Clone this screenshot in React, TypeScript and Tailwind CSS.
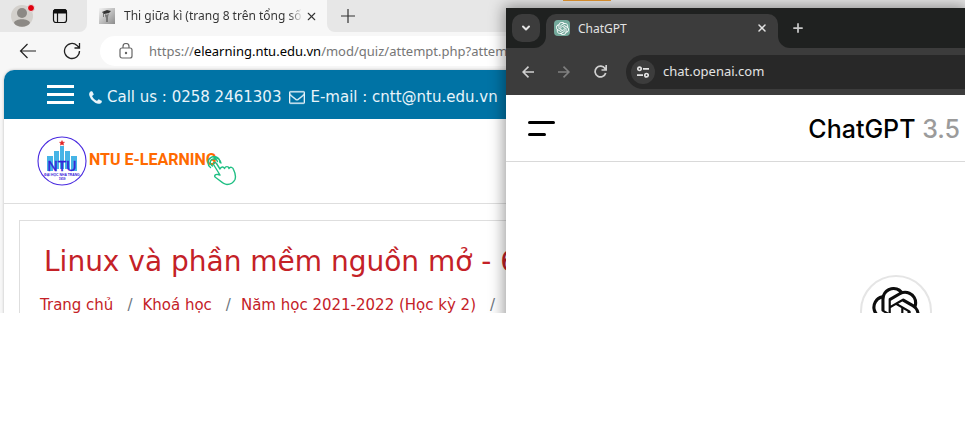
import React from "react";
import { ChevronDown, Plus, X } from "lucide-react";

const KNOT =
  "M22.2819 9.8211a5.9847 5.9847 0 0 0-.5157-4.9108 6.0462 6.0462 0 0 0-6.5098-2.9A6.0651 6.0651 0 0 0 4.9807 4.1818a5.9847 5.9847 0 0 0-3.9977 2.9 6.0462 6.0462 0 0 0 .7427 7.0966 5.98 5.98 0 0 0 .511 4.9107 6.051 6.051 0 0 0 6.5146 2.9001A5.9847 5.9847 0 0 0 13.2599 24a6.0557 6.0557 0 0 0 5.7718-4.2058 5.9894 5.9894 0 0 0 3.9977-2.9001 6.0557 6.0557 0 0 0-.7475-7.0729zm-9.022 12.6081a4.4755 4.4755 0 0 1-2.8764-1.0408l.1419-.0804 4.7783-2.7582a.7948.7948 0 0 0 .3927-.6813v-6.7369l2.02 1.1686a.071.071 0 0 1 .038.052v5.5826a4.504 4.504 0 0 1-4.4945 4.4944zm-9.6607-4.1254a4.4708 4.4708 0 0 1-.5346-3.0137l.142.0852 4.783 2.7582a.7712.7712 0 0 0 .7806 0l5.8428-3.3685v2.3324a.0804.0804 0 0 1-.0332.0615L9.74 19.9502a4.4992 4.4992 0 0 1-6.1408-1.6464zM2.3408 7.8956a4.485 4.485 0 0 1 2.3655-1.9728V11.6a.7664.7664 0 0 0 .3879.6765l5.8144 3.3543-2.0201 1.1685a.0757.0757 0 0 1-.071 0l-4.8303-2.7865A4.504 4.504 0 0 1 2.3408 7.872zm16.5963 3.8558L13.1038 8.364 15.1192 7.2a.0757.0757 0 0 1 .071 0l4.8303 2.7913a4.4944 4.4944 0 0 1-.6765 8.1042v-5.6772a.79.79 0 0 0-.407-.667zm2.0107-3.0231l-.142-.0852-4.7735-2.7818a.7759.7759 0 0 0-.7854 0L9.409 9.2297V6.8974a.0662.0662 0 0 1 .0284-.0615l4.8303-2.7866a4.4992 4.4992 0 0 1 6.6802 4.66zM8.3065 12.863l-2.02-1.1638a.0804.0804 0 0 1-.038-.0567V6.0742a4.4992 4.4992 0 0 1 7.3757-3.4537l-.142.0805L8.704 5.459a.7948.7948 0 0 0-.3927.6813zm1.0976-2.3654l2.602-1.4998 2.6069 1.4998v2.9994l-2.5974 1.4997-2.6067-1.4997Z";

function Knot({ className }: { className: string }) {
  return (
    <svg viewBox="0 0 24 24" fill="currentColor" className={className} aria-hidden="true">
      <path d={KNOT} />
    </svg>
  );
}

function Profile() {
  return (
    <svg viewBox="0 0 26 26" className="size-[26px]" aria-hidden="true">
      <circle cx="11" cy="13" r="11" fill="#d3d0cc" />
      <circle cx="11" cy="10" r="5" fill="#8c8985" />
      <path d="M3 20c1-5 15-5 16 0-3 5-13 5-16 0z" fill="#8c8985" />
      <circle cx="20" cy="5" r="3.5" fill="#e0000f" stroke="#e6e6e6" />
    </svg>
  );
}

function Workspaces() {
  return (
    <svg viewBox="0 0 16 16" className="size-4" fill="none" stroke="#111" aria-hidden="true">
      <rect x="1.5" y="1.5" width="13" height="13" rx="2.5" strokeWidth="1.2" />
      <path d="M1.5 5V3.500a2 2 0 0 1 2-2h9a2 2 0 0 1 2 2V5z" fill="#111" />
      <path d="M5.500 5v9" strokeWidth="1.2" />
    </svg>
  );
}

function SiteFavicon() {
  return (
    <svg viewBox="0 0 16 16" className="size-4 shrink-0" aria-hidden="true">
      <defs>
        <linearGradient id="steel" x1="0" x2="1" y1="0" y2="1">
          <stop offset="0" stopColor="#f4f4f4" />
          <stop offset="1" stopColor="#8c8c8c" />
        </linearGradient>
      </defs>
      <rect width="16" height="16" fill="url(#steel)" />
      <path d="M3 4l5-2 4 1-2 2-5 1z" fill="#333" />
      <path d="M6 6c1 1 3 1 4-1l-1 4v5H7v-4L6 8z" fill="#777" />
      <path d="M4.500 4v5" stroke="#555" strokeWidth=".7" />
    </svg>
  );
}

function NtuSeal() {
  return (
    <svg viewBox="0 0 50 50" className="size-[50px] shrink-0" role="img" aria-label="NTU">
      <circle cx="25" cy="25" r="24" fill="#fff" stroke="#4a2be0" strokeWidth="1.1" />
      <path d="M25 4.500l.8 1.700 1.700.1-1.300 1.200.4 1.700-1.600-.9-1.600.9.4-1.700-1.300-1.200 1.700-.1z" fill="#e02222" stroke="#e02222" strokeWidth=".5" />
      <path d="M10 20h6v15h-6zM17 15h5v18h-5zM23 10h4v23h-4zM28 15h5v18h-5zM34 20h6v15h-6z" fill="#46b4e6" />
      <text x="25" y="35" textAnchor="middle" fontSize="14" className="fill-[#3420d8] stroke-[#3420d8] stroke-[0.4] font-['Liberation_Sans',sans-serif]">NTU</text>
      <text x="25" y="40" textAnchor="middle" fontSize="3.4" className="fill-[#3420d8] font-['Liberation_Sans',sans-serif] font-bold">ĐẠI HỌC NHA TRANG</text>
      <text x="25" y="44" textAnchor="middle" fontSize="3" className="fill-[#3420d8] font-['Liberation_Sans',sans-serif] font-bold">1959</text>
    </svg>
  );
}

function TapHand() {
  return (
    <svg viewBox="0 0 30 30" className="size-[30px]" fill="none" stroke="#1fbf83" strokeWidth="1.4" strokeLinejoin="round" strokeLinecap="round" aria-hidden="true">
      <path d="M3.500 11.500a6 6 0 1 1 9.500-5M5.500 10a3.700 3.700 0 1 1 5-4.500M14 7a6 6 0 0 0-7-5" />
      <path d="M6.500 8.500c-.5-2 2-3 3-1l3.500 5.500c1-2.500 3.500-2.500 4.500-.5 1-2.500 4-2.500 4.500 0 1-2 4-1.500 4.500 1 2 4 2.500 7 1.500 10-2 4-5 5-8 5-4 0-8-5-12-7.500-1-2 1-3 3-2.500l2 .5z" />
    </svg>
  );
}

function EdgeWindow() {
  return (
    <section aria-label="NTU E-Learning" className="flex h-full flex-col bg-[#f7f7f7]">
      <div className="flex h-8 shrink-0 bg-[#f7f7f7]">
        <div className="flex w-[87px] items-center rounded-br-lg bg-[#e7e7e7] pl-[11px]">
          <button aria-label="Profile"><Profile /></button>
          <button aria-label="Workspaces" className="ml-[15px]"><Workspaces /></button>
        </div>
        <div className="flex w-[240px] items-center pl-3 pr-[9px]">
          <SiteFavicon />
          <span className="ml-2 h-5 w-[180px] overflow-hidden bg-linear-to-r from-[#333] from-92% to-[#33333300] bg-clip-text pl-px font-['Noto_Sans',sans-serif] text-xs leading-5 whitespace-nowrap text-transparent">Thi giữa kì (trang 8 trên tổng số 3</span>
          <button aria-label="Close tab" className="ml-auto"><X className="size-[13px] text-[#333]" strokeWidth={2} /></button>
        </div>
        <div className="flex grow items-center rounded-bl-lg bg-[#e7e7e7] pl-3">
          <button aria-label="New tab">
            <svg viewBox="0 0 18 18" className="size-[18px]" stroke="#333" strokeWidth="1.2" aria-hidden="true"><path d="M9 2v14M2 9h14" /></svg>
          </button>
        </div>
      </div>
      <div className="flex h-[38px] shrink-0 items-center pl-[19px]">
        <button aria-label="Back">
          <svg viewBox="0 0 18 18" className="size-[18px]" fill="none" stroke="#222" strokeWidth="1.2" aria-hidden="true"><path d="M17 9H1.500M8.500 2L1.500 9l7 7" /></svg>
        </button>
        <button aria-label="Refresh" className="ml-[26px]">
          <svg viewBox="0 0 18 18" className="size-[18px]" fill="none" stroke="#222" strokeWidth="1.3" aria-hidden="true"><path d="M16.500 9a7.500 7.500 0 1 1-2.500-5.600L16 5.500M16.500 1v5h-5" /></svg>
        </button>
        <div className="ml-[19px] flex h-[30px] grow items-center rounded-l-full bg-white pl-[19px]">
          <svg viewBox="0 0 14 16" className="h-4 w-[14px]" fill="none" stroke="#666" strokeWidth="1.2" aria-hidden="true">
            <rect x="1" y="5" width="12" height="10" rx="2" />
            <path d="M4 5V3.500a3 3 0 0 1 6 0V5" />
            <circle cx="7" cy="10" r=".6" fill="#666" />
          </svg>
          <div role="textbox" aria-label="Address" className="ml-4 pt-px font-['Noto_Sans',sans-serif] text-[13px] whitespace-nowrap text-[#767676]">
            https://<span className="text-black">elearning.ntu.edu.vn</span>/mod/quiz/attempt.php?attempt=
          </div>
        </div>
      </div>
      <div className="ml-1 flex grow flex-col rounded-tl-[10px] bg-white font-['DejaVu_Sans',Verdana,sans-serif] shadow-[0_0_3px_#00000040]">
        <div className="flex h-[49px] shrink-0 items-center rounded-tl-[10px] bg-[#0073a5] pt-[6px] pl-[43px] text-[15px] whitespace-nowrap text-[#e8f4fa]">
          <button aria-label="Menu" className="mb-[6px] flex w-[27px] flex-col gap-[5px]">
            <span className="h-[3px] bg-white" />
            <span className="h-[3px] bg-white" />
            <span className="h-[3px] bg-white" />
          </button>
          <svg viewBox="0 0 1408 1664" className="ml-[15px] h-[15px] w-[13px]" fill="currentColor" aria-hidden="true">
            <path d="M1408 1240q0 27-10 70.500t-21 68.500q-21 50-122 106-94 51-186 51-27 0-53-3.500t-57.500-12.500-47-14.500T856 1485t-49-18q-98-35-175-83-127-79-264-216T152 904q-48-77-83-175-3-9-18-49t-20.500-55.500-14.500-47T3.500 520 0 467q0-92 51-186 56-101 106-122 25-11 68.500-21t70.500-10q14 0 21 3 18 6 53 76 11 19 30 54t35 63.500 31 53.500q3 4 17.500 25t21.500 35.500 7 28.500q0 20-28.500 50t-62 55-62 53-28.500 46q0 9 5 22.500t8.500 20.500 14 24 11.500 19q76 137 174 235t235 174q2 1 19 11.500t24 14 20.500 8.500 22.500 5q18 0 46-28.500t53-62 55-62 50-28.500q14 0 28.500 7t35.500 21.500 25 17.500q25 15 53.500 31t63.500 35 54 30q70 35 76 53 3 7 3 21z" />
          </svg>
          <span className="ml-[5px]">Call us : 0258 2461303</span>
          <svg viewBox="0 128 1792 1664" className="ml-2 h-[15px] w-4" fill="currentColor" stroke="currentColor" strokeWidth="40" aria-hidden="true">
            <path d="M1664 1504V736q-32 36-69 66-268 206-426 338-51 43-83 67t-86.500 48.500T897 1280h-2q-48 0-102.500-24.500T706 1207t-83-67q-158-132-426-338-37-30-69-66v768q0 13 9.500 22.500t22.500 9.500h1472q13 0 22.500-9.500t9.500-22.500zm0-1051v-24.500l-.5-13-3-12.500-5.500-9-9-7.500-14-2.500H160q-13 0-22.500 9.500T128 416q0 168 147 284 193 152 401 317 6 5 35 29.500t46 37.500 44.500 31.500T852 1143t43 9h2q20 0 43-9t50.500-27.500T1035 1084t46-37.500 35-29.500q208-165 401-317 54-43 100.500-115.500T1664 453zm128-37v1088q0 66-47 113t-113 47H160q-66 0-113-47T0 1504V416q0-66 47-113t113-47h1472q66 0 113 47t47 113z" />
          </svg>
          <span className="ml-[5px]">E-mail : cntt@ntu.edu.vn</span>
        </div>
        <header className="flex h-[85px] shrink-0 items-center border-b border-[#dedede] pl-[33px]">
          <a href="#home" className="relative flex items-center">
            <NtuSeal />
            <span className="mb-[2px] ml-[2px] font-[Roboto,sans-serif] text-base font-bold whitespace-nowrap text-[#ff6a00]">NTU E-LEARNING</span>
            <span className="absolute top-5 left-[170px]"><TapHand /></span>
          </a>
        </header>
        <main className="mt-4 ml-[15px] grow border-t border-l border-[#dedede] pl-5 whitespace-nowrap text-[#c42127]">
          <h1 className="pt-[21px] pl-1 text-[28px] leading-10">Linux và phần mềm nguồn mở - 6</h1>
          <nav aria-label="Breadcrumb" className="mt-[11px] flex text-[15px] leading-6">
            <a href="#home">Trang chủ</a>
            <span className="mr-[10px] ml-[14px] text-[#6c757d]">/</span>
            <a href="#courses">Khoá học</a>
            <span className="mr-[10px] ml-[14px] text-[#6c757d]">/</span>
            <a href="#year">Năm học 2021-2022 (Học kỳ 2)</a>
            <span className="mr-[10px] ml-[14px] text-[#6c757d]">/</span>
          </nav>
        </main>
      </div>
    </section>
  );
}

function ChromeWindow() {
  return (
    <section aria-label="ChatGPT" className="absolute top-2 right-0 bottom-0 left-[506px] flex flex-col overflow-hidden bg-white">
      <div className="flex h-10 shrink-0 bg-[#3c3c3c]">
        <div className="flex w-10 justify-center rounded-br-xl bg-[#1f2120] pt-[6px]">
          <button aria-label="Search tabs" className="flex size-7 items-center justify-center rounded-[10px] bg-[#3c3c3c]">
            <ChevronDown className="size-3 text-[#e3e3e3]" strokeWidth={4} />
          </button>
        </div>
        <div className="flex w-[232px] bg-[#1f2120] pt-[6px]">
          <div className="flex grow items-center rounded-t-[10px] bg-[#3c3c3c] pr-[10px] pb-[6px] pl-2">
            <span className="flex size-4 items-center justify-center rounded-sm bg-[#74aa9c]"><Knot className="size-[13px] text-white" /></span>
            <span className="ml-2 pt-px font-['Noto_Sans',sans-serif] text-xs text-[#e3e3e3]">ChatGPT</span>
            <button aria-label="Close tab" className="ml-auto"><X className="size-3 text-[#e3e3e3]" strokeWidth={3} /></button>
          </div>
        </div>
        <div className="flex grow items-center rounded-bl-xl bg-[#1f2120] pl-[13px]">
          <button aria-label="New tab"><Plus className="size-[14px] text-[#c7c7c7]" strokeWidth={3} /></button>
        </div>
      </div>
      <div className="flex h-[47px] shrink-0 items-center bg-[#3c3c3c] pl-4">
        <button aria-label="Back">
          <svg viewBox="0 0 12 12" className="size-3" fill="none" stroke="#d0d0d0" strokeWidth="1.6" aria-hidden="true"><path d="M12 6H1M6.500.6L1.100 6l5.400 5.400" /></svg>
        </button>
        <button aria-label="Forward" className="ml-6">
          <svg viewBox="0 0 12 12" className="size-3" fill="none" stroke="#808080" strokeWidth="1.6" aria-hidden="true"><path d="M0 6h11M5.500.6L10.900 6l-5.400 5.400" /></svg>
        </button>
        <button aria-label="Reload" className="ml-6">
          <svg viewBox="0 0 13 13" className="size-[13px]" fill="none" stroke="#d0d0d0" strokeWidth="1.7" aria-hidden="true"><path d="M11.700 8A5.400 5.400 0 1 1 11 3.500l1 1.500M12.200 0v5H7.500" /></svg>
        </button>
        <div className="ml-[19px] flex h-[34px] grow items-center rounded-l-full bg-[#282828] pl-[5px]">
          <button aria-label="View site information" className="flex size-6 shrink-0 items-center justify-center rounded-full bg-[#3c3c3c]">
            <svg viewBox="0 0 12 12" className="size-3" fill="none" stroke="#e3e3e3" strokeWidth="1.7" aria-hidden="true">
              <circle cx="2.500" cy="2.800" r="1.700" />
              <path d="M6 2.800h6M0 9.200h6" />
              <circle cx="9.500" cy="9.200" r="1.700" />
            </svg>
          </button>
          <input aria-label="Address" defaultValue="chat.openai.com" className="ml-2 w-full min-w-0 bg-transparent font-['Noto_Sans',sans-serif] text-[13px] text-[#e3e3e3] outline-none" />
        </div>
      </div>
      <header className="flex h-[67px] shrink-0 items-center justify-between border-b border-[#d9d9d9] pr-[5px] pl-[22px]">
        <button aria-label="Open sidebar" className="flex flex-col gap-[9px]">
          <span className="h-[3px] w-[27px] rounded-full bg-black" />
          <span className="h-[3px] w-[18px] rounded-full bg-black" />
        </button>
        <h2 className="pt-1 font-['Inter',sans-serif] text-[25px] font-medium whitespace-nowrap text-black">
          ChatGPT <span className="text-[#9b9b9b]">3.5</span>
        </h2>
      </header>
      <div className="flex justify-end pt-[113px] pr-[33px]">
        <span className="flex size-[72px] shrink-0 items-center justify-center rounded-full border-2 border-[#e5e5e5]">
          <Knot className="size-12 text-[#0d0d0d]" />
        </span>
      </div>
    </section>
  );
}

export default function App() {
  return (
    <div className="bg-white">
      <div className="relative h-[313px] overflow-hidden">
        <EdgeWindow />
        <div className="absolute top-2 right-0 -bottom-4 left-[506px] shadow-[0_0_14px_2px_#00000066]" />
        <div className="absolute top-0 left-[563px] h-px w-12 bg-[#d08a2c]" />
        <ChromeWindow />
      </div>
    </div>
  );
}
